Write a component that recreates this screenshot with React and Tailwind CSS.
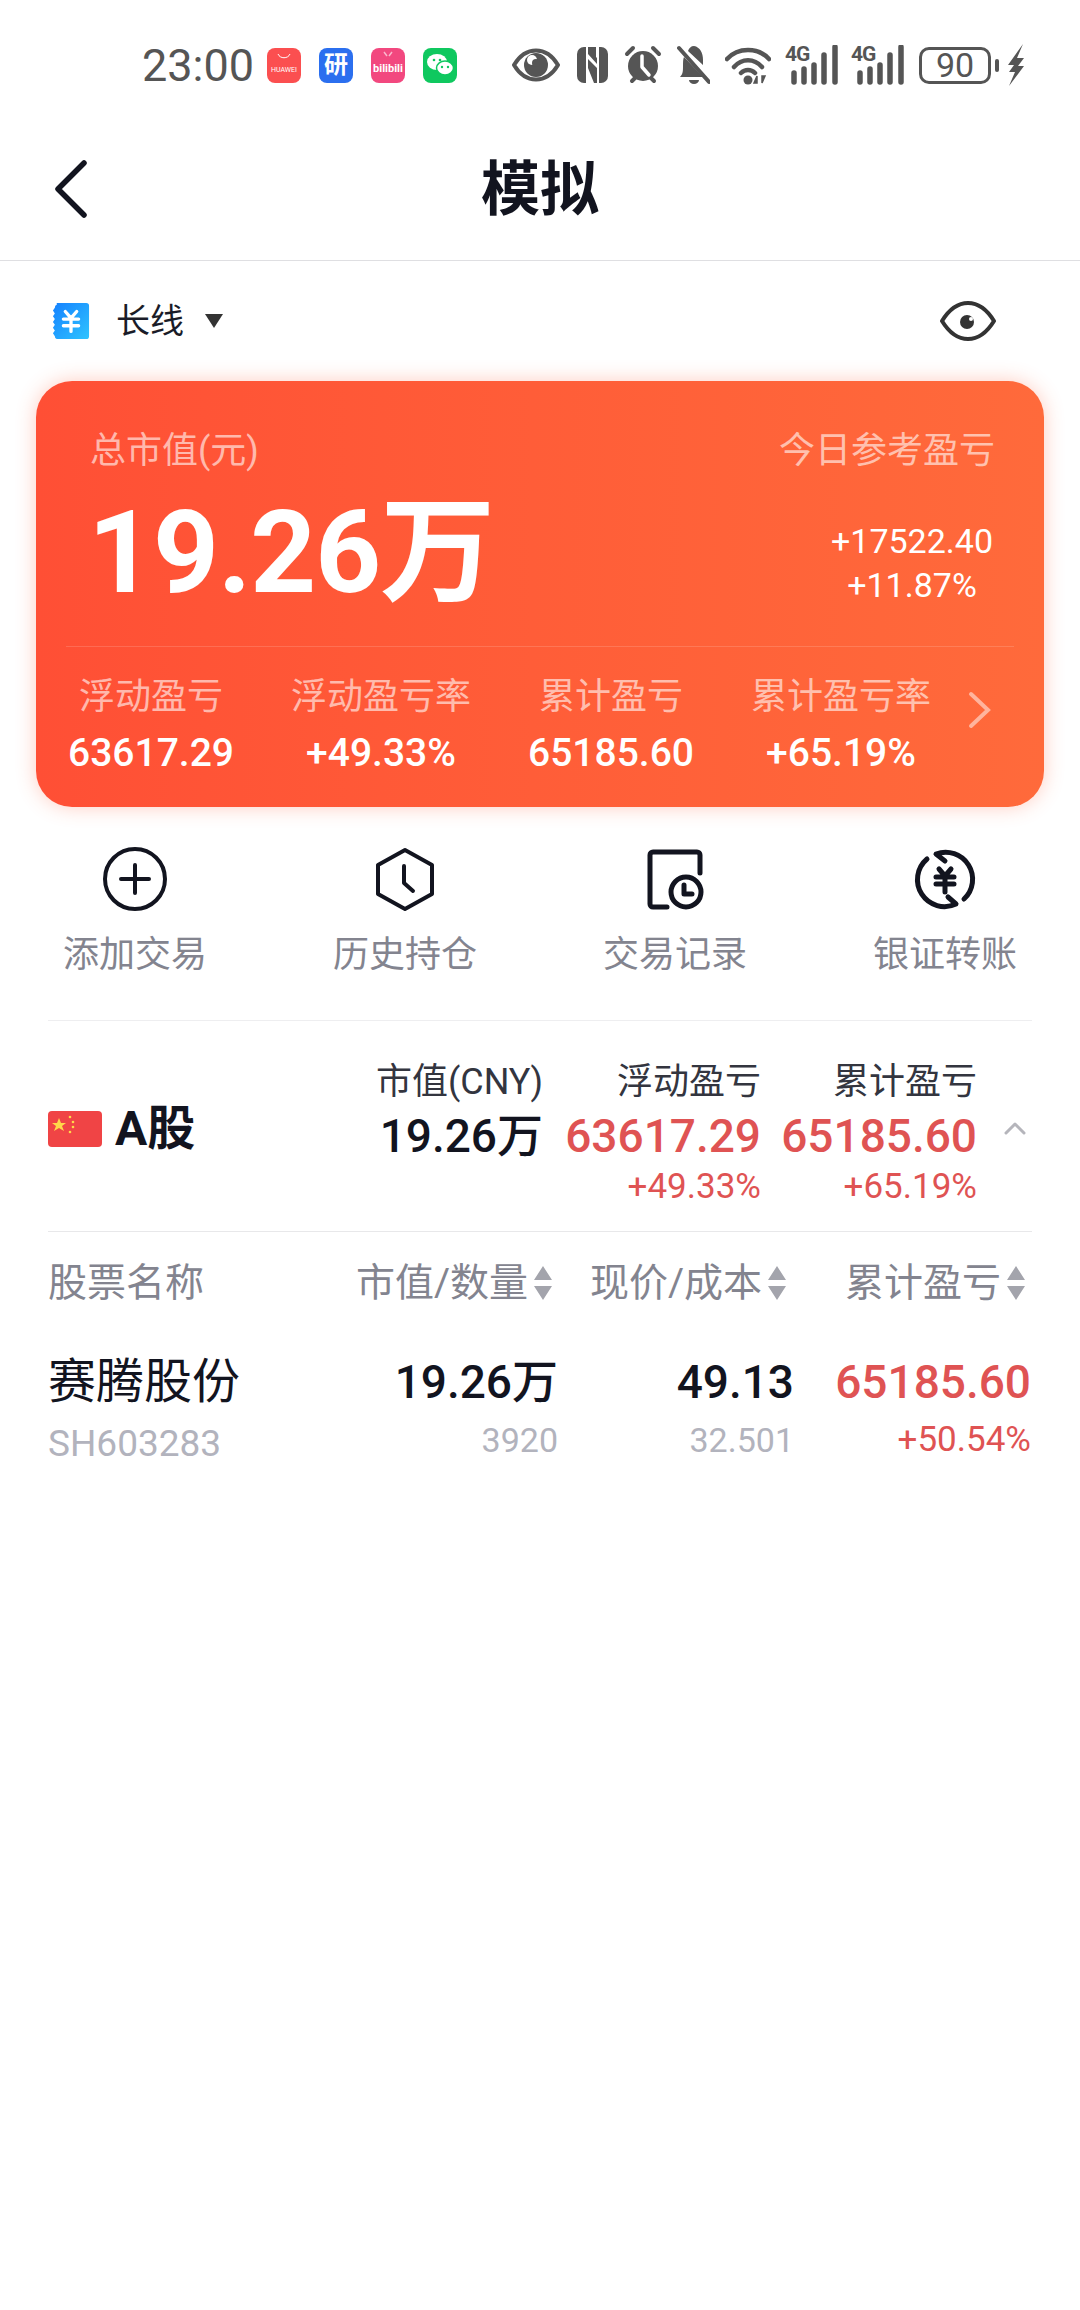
import React from "react";

const metrics = [
    { label: "浮动盈亏", value: "63617.29" },
    { label: "浮动盈亏率", value: "+49.33%" },
    { label: "累计盈亏", value: "65185.60" },
    { label: "累计盈亏率", value: "+65.19%" },
];

function EyeStatus() {
    return (
        <svg width="48" height="34" viewBox="0 0 48 34" className="ml-[55px]">
            <path d="M2 17C8 7 15 2.500 24 2.500S40 7 46 17C40 27 33 31.500 24 31.500S8 27 2 17Z" fill="none" stroke="#555" strokeWidth="4" strokeLinejoin="round" />
            <circle cx="24" cy="17" r="12" fill="#555" />
            <circle cx="20" cy="12" r="5" fill="#fff" />
            <circle cx="24" cy="15" r="4" fill="#555" />
        </svg>
    );
}

function NfcIcon() {
    return (
        <svg width="33" height="38" viewBox="0 0 33 38" className="ml-[16px]">
            <path d="M8 1h2v36H8a7 7 0 0 1-7-7V8a7 7 0 0 1 7-7Z" fill="#555" />
            <path d="M23 1h2a7 7 0 0 1 7 7v22a7 7 0 0 1-7 7h-2Z" fill="#555" />
            <path d="M12 1h8v10l1 1v6L12 8ZM12 13l9 9v15h-3L12 22Z" fill="#555" />
        </svg>
    );
}

function AlarmIcon() {
    return (
        <svg width="38" height="40" viewBox="0 0 38 40" className="ml-[15px]">
            <circle cx="19" cy="21" r="15" fill="#555" />
            <path d="M3 9 9 3M35 9 29 3M8 36l3-3M30 36l-3-3" stroke="#555" strokeWidth="4" strokeLinecap="round" />
            <path d="M18 11v11l7 8" fill="none" stroke="#fff" strokeWidth="3.500" strokeLinecap="round" strokeLinejoin="round" />
        </svg>
    );
}

function BellOffIcon() {
    return (
        <svg width="33" height="40" viewBox="0 0 33 40" className="ml-[15px]">
            <path d="M3 32c3-3 3-6 3-11 0-4 0-7 1-9l19 20ZM11 6c1-3 3-5 6-5 6 1 9 7 9 14v5Z" fill="#555" />
            <path d="M2 3 32 37" stroke="#555" strokeWidth="4" strokeLinecap="round" />
            <path d="M12 35h10a5 4 0 0 1-10 0Z" fill="#555" />
        </svg>
    );
}

function WifiIcon() {
    return (
        <svg width="46" height="40" viewBox="0 0 46 40" className="ml-[15px]">
            <path d="M2 14C13 2 33 2 44 14M9 22C17 13 29 13 37 22M16 28c4-4 10-4 14 0" fill="none" stroke="#555" strokeWidth="4.500" strokeLinecap="round" />
            <circle cx="23" cy="35" r="4.500" fill="#555" />
            <path d="M32 38v-7l-3 7ZM37 31v7l3-7Z" fill="#555" stroke="#555" strokeWidth="1.500" />
        </svg>
    );
}

function SignalIcon({ gap }) {
    return (
        <div className={gap}>
            <div className="relative h-[40px] w-[53px]">
                <span className="absolute left-0 top-[-3px] text-[21px] leading-[24px] font-bold text-[#555] tracking-[-1px]">4G</span>
                <svg width="53" height="40" viewBox="0 0 53 40" className="absolute left-0 top-0">
                    <path d="M9 28v9M19 24v13M29 20v17M39 10v27M50 2v35" stroke="#555" strokeWidth="5.500" strokeLinecap="round" />
                </svg>
            </div>
        </div>
    );
}

function StatusBar() {
    return (
        <div className="flex h-[130px] items-center pl-[142px] text-[#555]">
            <span className="w-[112px] text-[45px] leading-none">23:00</span>
            <div className="relative ml-[13px] flex h-[35px] w-[34px] flex-col items-center justify-end rounded-[8px] bg-[#fb4f50] pb-[8px] text-white">
                <svg width="14" height="6" viewBox="0 0 14 6" className="absolute left-[10px] top-[5px]">
                    <path d="M1 1c2 5 10 5 12 0" fill="none" stroke="#fff" strokeWidth="1" />
                </svg>
                <span className="text-[7px] leading-[9px]">HUAWEI</span>
            </div>
            <div className="ml-[18px] flex h-[35px] w-[34px] items-center justify-center rounded-[8px] bg-[#2b6fef] text-[24px] font-bold leading-none text-white">研</div>
            <div className="relative ml-[18px] flex h-[35px] w-[34px] items-center justify-center rounded-[8px] bg-[#f2487f] pt-[6px] text-[11px] font-bold leading-none text-white">
                <svg width="14" height="6" viewBox="0 0 14 6" className="absolute left-[10px] top-[3px]">
                    <path d="M3 1l3 4M11 1 8 5" fill="none" stroke="#fff" strokeOpacity="0.6" strokeWidth="1.500" />
                </svg>
                bilibili
            </div>
            <div className="ml-[18px] flex h-[35px] w-[34px] items-center justify-center rounded-[8px] bg-[#0fc85f]">
                <svg width="28" height="24" viewBox="0 0 28 24">
                    <ellipse cx="11" cy="9" rx="10" ry="8" fill="#fff" />
                    <ellipse cx="19" cy="15" rx="8.500" ry="7" fill="#fff" stroke="#0fc85f" strokeWidth="1.500" />
                    <circle cx="8" cy="7" r="1.300" fill="#0fc85f" />
                    <circle cx="14" cy="7" r="1.300" fill="#0fc85f" />
                    <circle cx="16" cy="14" r="1.200" fill="#0fc85f" />
                    <circle cx="22" cy="14" r="1.200" fill="#0fc85f" />
                </svg>
            </div>
            <EyeStatus />
            <NfcIcon />
            <AlarmIcon />
            <BellOffIcon />
            <WifiIcon />
            <SignalIcon gap="ml-[14px]" />
            <SignalIcon gap="ml-[13px]" />
            <div className="ml-[15px] flex h-[37px] w-[72px] items-center justify-center rounded-[10px] border-[3px] border-[#555] text-[34px] leading-none">90</div>
            <div className="ml-[4px] h-[13px] w-[4px] rounded-[2px] bg-[#555]"></div>
            <svg width="18" height="42" viewBox="0 0 18 42" className="ml-[8px]">
                <path d="M16 0 1 21h6L2 28h6L2 42l15-20h-6l6-8h-7Z" fill="#555" />
            </svg>
        </div>
    );
}

function BigCard() {
    return (
        <div className="mx-[36px] flex h-[426px] w-[1008px] flex-col rounded-[36px] bg-linear-to-r from-[#ff4f35] to-[#ff6a3b] text-white shadow-[0_0_20px_rgba(255,90,50,0.3)]">
            <div className="flex justify-between pl-[54px] pr-[49px] pt-[49px] text-[36px] leading-[42px] text-white/60">
                <span>总市值(元)</span>
                <span>今日参考盈亏</span>
            </div>
            <div className="mx-[30px] flex h-[175px] items-center justify-between border-b border-white/15 pl-[22px] pr-[21px]">
                <div className="pb-[12px] text-[115px] font-bold leading-[120px] tracking-[-1px]">19.26万</div>
                <div className="flex flex-col items-center pt-[8px] text-[34px] leading-[44px]">
                    <span>+17522.40</span>
                    <span>+11.87%</span>
                </div>
            </div>
            <div className="flex flex-1 items-start">
                {metrics.map((m) => (
                    <div key={m.label} className="flex w-[230px] flex-col items-center pt-[29px]">
                        <span className="text-[36px] leading-[42px] text-white/60">{m.label}</span>
                        <span className="mt-[12px] text-[39px] leading-[46px] font-medium">{m.value}</span>
                    </div>
                ))}
                <svg width="24" height="38" viewBox="0 0 24 38" className="ml-[12px] mt-[44px]">
                    <path d="M3 3 20 19 3 35" fill="none" stroke="#ffffff" strokeOpacity="0.5" strokeWidth="4" strokeLinecap="round" />
                </svg>
            </div>
        </div>
    );
}

const actionIcons = {
    add: (
        <svg width="66" height="66" viewBox="0 0 66 66" fill="none" stroke="#12141f" strokeWidth="4" strokeLinecap="round">
            <circle cx="33" cy="33" r="30" />
            <path d="M19 33h28M33 19v28" />
        </svg>
    ),
    history: (
        <svg width="66" height="66" viewBox="0 0 66 66" fill="none" stroke="#12141f" strokeWidth="4" strokeLinecap="round" strokeLinejoin="round">
            <path d="M33 4 60 19v29L33 63 6 48V19Z" />
            <path d="M32 20v17l9 8" />
        </svg>
    ),
    record: (
        <svg width="66" height="66" viewBox="0 0 66 66" fill="none" stroke="#12141f" strokeWidth="5" strokeLinecap="round" strokeLinejoin="round">
            <path d="M58 27V9a3 3 0 0 0-3-3H11a3 3 0 0 0-3 3v49a3 3 0 0 0 3 3h14" />
            <circle cx="44" cy="46" r="15" />
            <path d="M42 39v9h8" />
        </svg>
    ),
    transfer: (
        <svg width="66" height="66" viewBox="0 0 66 66" fill="none" stroke="#12141f" strokeWidth="5" strokeLinecap="round" strokeLinejoin="round">
            <path d="M33 15 24 8A27 27 0 0 1 52 53" />
            <path d="M36 51 44 58A27 27 0 0 1 15 13" />
            <path d="M27 23l6 7 6-7M24 31h18M24 38h18M33 30v16" />
        </svg>
    ),
};

const actions = [
    { key: "add", label: "添加交易" },
    { key: "history", label: "历史持仓" },
    { key: "record", label: "交易记录" },
    { key: "transfer", label: "银证转账" },
];

function SortArrows() {
    return (
        <svg width="20" height="36" viewBox="0 0 20 36" className="ml-[5px] shrink-0">
            <path d="M10 1 19 15H1ZM1 21h18L10 35Z" fill="#a3a4ac" />
        </svg>
    );
}

function Flag() {
    return (
        <svg width="54" height="36" viewBox="0 0 54 36">
            <rect width="54" height="36" rx="4" fill="#f04445" />
            <path d="M11 7l2 5h5l-4 3 2 5-5-3-5 3 2-5-4-3h5Z" fill="#ffd84a" />
            <circle cx="22" cy="6" r="1.300" fill="#ffd84a" />
            <circle cx="25" cy="11" r="1.300" fill="#ffd84a" />
            <circle cx="25" cy="16" r="1.300" fill="#ffd84a" />
            <circle cx="22" cy="21" r="1.300" fill="#ffd84a" />
        </svg>
    );
}

export default function App() {
    return (
        <div className="min-h-[2310px] w-[1080px] overflow-hidden whitespace-nowrap bg-white font-[family-name:Roboto,'Noto_Sans_CJK_SC',sans-serif] text-[#12141f]">
            <StatusBar />

            <div className="relative flex h-[131px] items-center justify-center border-b border-[#dfdfe2] pb-[12px]">
                <svg width="38" height="58" viewBox="0 0 38 58" className="absolute left-[52px] top-[30px]">
                    <path d="M32 3 6 29l26 26" fill="none" stroke="#12141f" strokeWidth="5.500" strokeLinecap="round" strokeLinejoin="round" />
                </svg>
                <span className="text-[59px] font-bold leading-none">模拟</span>
            </div>

            <div className="flex h-[120px] items-center justify-between pl-[52px] pr-[84px]">
                <div className="flex items-center">
                    <svg width="38" height="38" viewBox="0 0 40 38">
                        <defs>
                            <linearGradient id="ticket" x1="0" y1="0" x2="1" y2="1">
                                <stop offset="0" stopColor="#1581ff" />
                                <stop offset="1" stopColor="#2fc4ff" />
                            </linearGradient>
                        </defs>
                        <path d="M5 0h31a3 3 0 0 1 3 3v32a3 3 0 0 1-3 3H5a3 3 0 0 1-2-3l-2-3 2-3-2-3 2-3-2-3 2-3-2-3 2-3-2-3 2-3a3 3 0 0 1 2-3Z" fill="url(#ticket)" />
                        <path d="M14 9l6 7 6-7M12 17h16M12 24h16M20 16v14" fill="none" stroke="#fff" strokeWidth="3.500" strokeLinecap="round" strokeLinejoin="round" />
                    </svg>
                    <span className="ml-[26px] text-[34px] leading-none text-[#1a1c28]">长线</span>
                    <svg width="20" height="14" viewBox="0 0 20 14" className="ml-[20px]">
                        <path d="M1 0h18l-9 14Z" fill="#333" />
                    </svg>
                </div>
                <svg width="56" height="40" viewBox="0 0 56 40">
                    <path d="M2 20C10 7 18 2 28 2s18 5 26 18c-8 13-16 18-26 18S10 33 2 20Z" fill="none" stroke="#333" strokeWidth="4" strokeLinejoin="round" />
                    <circle cx="27" cy="21" r="7" fill="#333" />
                    <circle cx="31" cy="18" r="2" fill="#fff" />
                </svg>
            </div>

            <BigCard />

            <div className="grid h-[213px] grid-cols-4 pt-[39px]">
                {actions.map((a) => (
                    <div key={a.key} className="flex flex-col items-center">
                        {actionIcons[a.key]}
                        <span className="mt-[22px] text-[36px] leading-[42px] text-[#83848f]">{a.label}</span>
                    </div>
                ))}
            </div>

            <div className="mx-[48px] w-[984px] border-t border-[#eeeef0]">
                <div className="flex h-[211px] border-b border-[#e8e8ea]">
                    <div className="flex h-[210px] w-[326px] items-center pt-[6px]">
                        <Flag />
                        <span className="ml-[13px] text-[48px] font-bold leading-none">A股</span>
                    </div>
                    <div className="flex w-[169px] flex-col items-end pt-[40px]">
                        <span className="text-[36px] leading-[42px] text-[#33353f]">市值(CNY)</span>
                        <span className="mt-[8px] text-[46px] font-medium leading-[50px]">19.26万</span>
                    </div>
                    <div className="flex w-[218px] flex-col items-end pt-[40px]">
                        <span className="text-[36px] leading-[42px] text-[#33353f]">浮动盈亏</span>
                        <span className="mt-[8px] text-[46px] font-medium leading-[50px] text-[#df5353]">63617.29</span>
                        <span className="mt-[5px] text-[35px] leading-[42px] text-[#df5353]">+49.33%</span>
                    </div>
                    <div className="flex w-[216px] flex-col items-end pt-[40px]">
                        <span className="text-[36px] leading-[42px] text-[#33353f]">累计盈亏</span>
                        <span className="mt-[8px] text-[46px] font-medium leading-[50px] text-[#df5353]">65185.60</span>
                        <span className="mt-[5px] text-[35px] leading-[42px] text-[#df5353]">+65.19%</span>
                    </div>
                    <svg width="22" height="14" viewBox="0 0 22 14" className="ml-[27px] mt-[100px]">
                        <path d="M2 12 11 3l9 9" fill="none" stroke="#b5b5bb" strokeWidth="3" strokeLinecap="round" strokeLinejoin="round" />
                    </svg>
                </div>

                <div className="flex h-[102px] items-center text-[39px] leading-none text-[#83848f]">
                    <span className="w-[308px]">股票名称</span>
                    <span className="flex w-[197px] items-center justify-end">市值/数量<SortArrows /></span>
                    <span className="flex w-[234px] items-center justify-end">现价/成本<SortArrows /></span>
                    <span className="flex w-[239px] items-center justify-end">累计盈亏<SortArrows /></span>
                </div>

                <div className="flex pt-[21px]">
                    <div className="flex w-[300px] flex-col">
                        <span className="text-[48px] leading-[54px]">赛腾股份</span>
                        <span className="mt-[14px] text-[37px] leading-[42px] text-[#b2b3bd]">SH603283</span>
                    </div>
                    <div className="flex w-[210px] flex-col items-end">
                        <span className="text-[46px] font-medium leading-[54px]">19.26万</span>
                        <span className="mt-[10px] text-[34px] leading-[42px] text-[#b2b3bd]">3920</span>
                    </div>
                    <div className="flex w-[236px] flex-col items-end">
                        <span className="text-[46px] font-medium leading-[54px]">49.13</span>
                        <span className="mt-[10px] text-[34px] leading-[42px] text-[#b2b3bd]">32.501</span>
                    </div>
                    <div className="flex w-[237px] flex-col items-end">
                        <span className="text-[46px] font-medium leading-[54px] text-[#df5353]">65185.60</span>
                        <span className="mt-[10px] text-[35px] leading-[42px] text-[#df5353]">+50.54%</span>
                    </div>
                </div>
            </div>
        </div>
    );
}
